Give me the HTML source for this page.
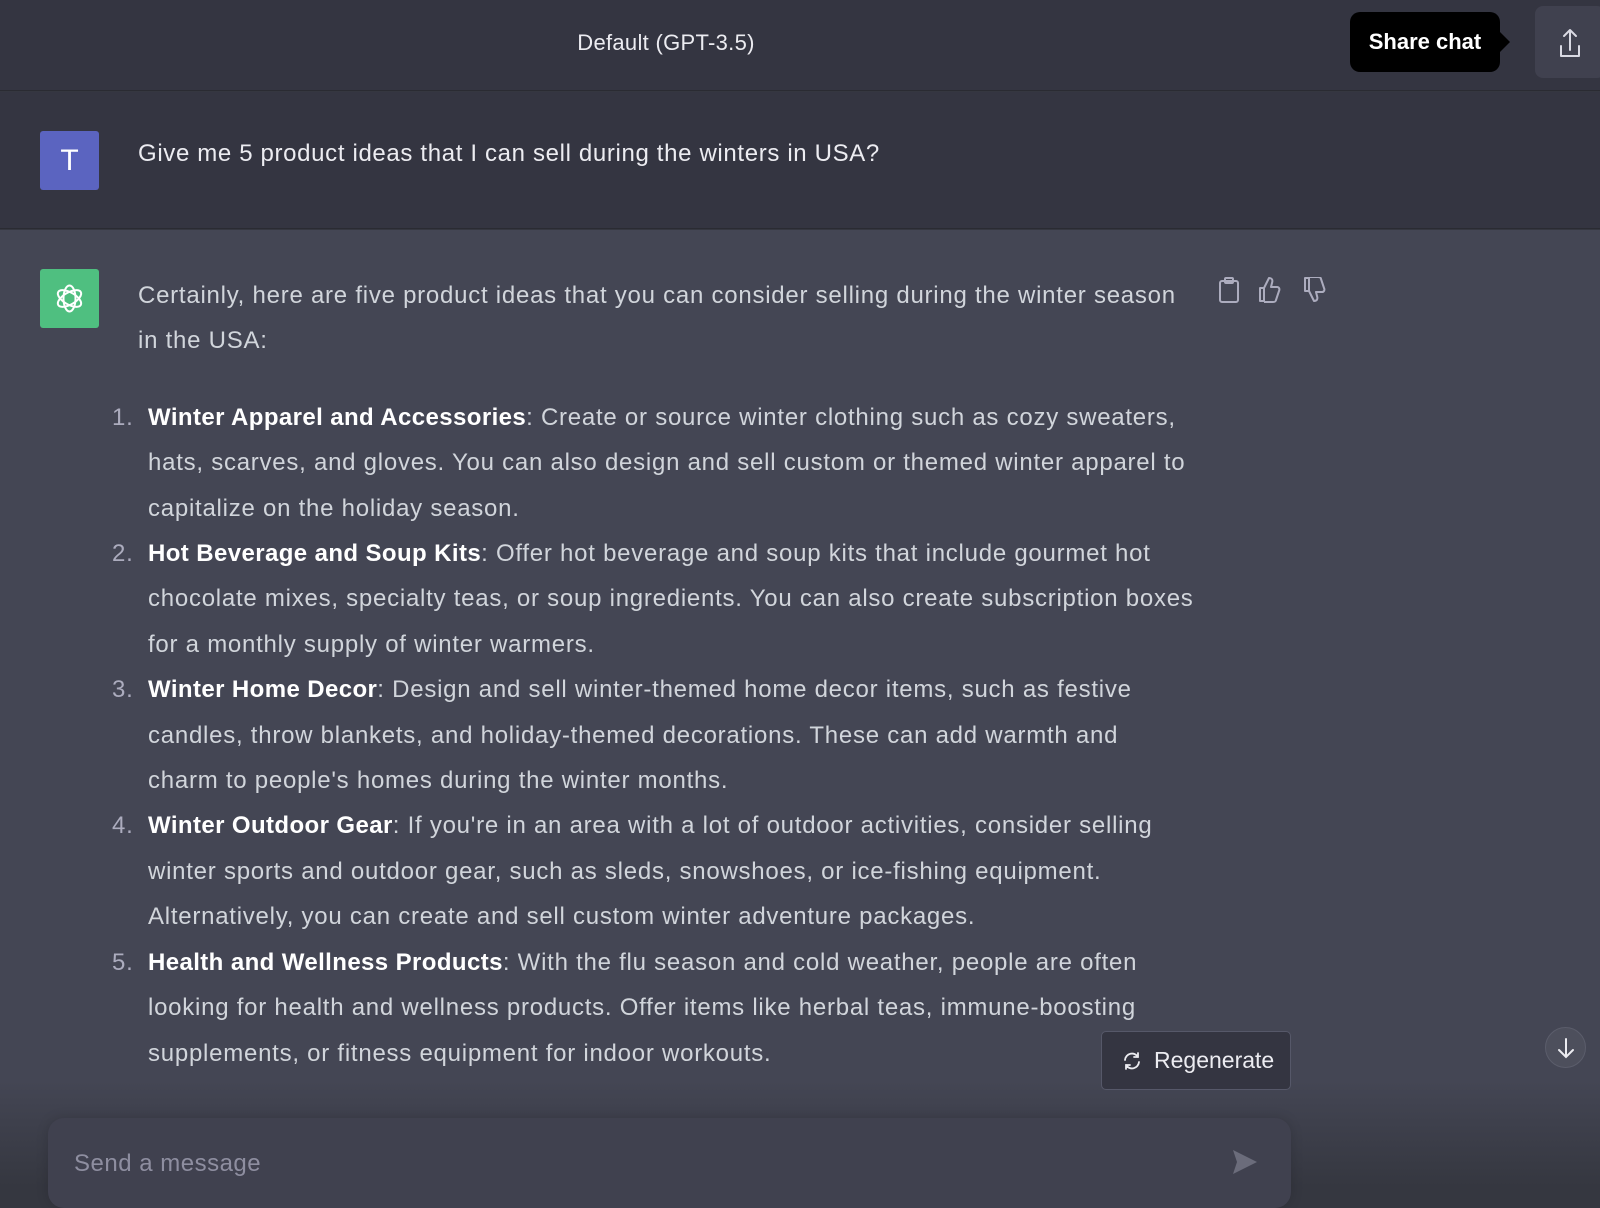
<!DOCTYPE html>
<html><head><meta charset="utf-8"><style>
*{margin:0;padding:0;box-sizing:border-box}
body{width:1600px;height:1187px;overflow:hidden;background:#353740;font-family:"Liberation Sans",sans-serif;position:relative}
.main{position:absolute;left:0;top:230px;width:1600px;height:860px;background:#444654}
.hdr{position:absolute;left:0;top:0;width:1600px;height:91px;background:#343541;border-bottom:1px solid #2a2b32}
.title{position:absolute;left:0;width:1332px;top:30px;text-align:center;color:#ececf1;font-size:22px;letter-spacing:0.3px}
.tip{position:absolute;left:1350px;top:12px;width:150px;height:60px;background:#000;border-radius:10px;color:#fff;font-weight:bold;font-size:22px;line-height:60px;text-align:center}
.tip:after{content:"";position:absolute;right:-10px;top:20px;border-left:10px solid #000;border-top:10px solid transparent;border-bottom:10px solid transparent}
.sbtn{position:absolute;left:1535px;top:6px;width:70px;height:72px;background:#40414f;border-radius:8px}
.user{position:absolute;left:0;top:92px;width:1600px;height:137px;background:#343541;border-bottom:1px solid #2a2b32}
.av{position:absolute;left:40px;width:59px;height:59px;border-radius:3px}
.utext{position:absolute;left:138px;top:138px;color:#ececf1;font-size:24px;line-height:32px;white-space:nowrap;letter-spacing:0.65px}
.ans{position:absolute;left:138px;top:273px;color:#d1d5db;font-size:24px;line-height:45.4px;white-space:nowrap;letter-spacing:0.75px}
.ans b{color:#fff;letter-spacing:0.4px}
.li{position:relative;padding-left:10px}
.num{position:absolute;left:-26px;color:#acacbe}
.bot{position:absolute;left:0;top:1080px;width:1600px;height:107px;background:linear-gradient(#444654,#353740)}
.regen{position:absolute;left:1101px;top:1031px;width:190px;height:59px;border:1px solid #565869;background:#343541;border-radius:5px;color:#ececf1;font-size:23px;line-height:57px;padding-left:52px}
.inp{position:absolute;left:48px;top:1118px;width:1243px;height:90px;background:#40414f;border-radius:16px;box-shadow:0 0 12px rgba(0,0,0,.15)}
.ph{position:absolute;left:26px;top:32px;color:#8e8ea0;font-size:24px;letter-spacing:0.5px}
.down{position:absolute;left:1545px;top:1027px;width:41px;height:41px;border-radius:50%;background:#4d4f5c;border:1px solid #5b5d6b}
</style></head><body>
<div class="main"></div>
<div class="hdr"><div class="title">Default (GPT-3.5)</div></div>
<div class="tip">Share chat</div>
<div class="sbtn"><svg width="70" height="72" viewBox="0 0 70 72" fill="none" stroke="#d9d9e3" stroke-width="2" stroke-linecap="round" stroke-linejoin="round"><path d="M26 40v10h18V40M35 24v20M29 30l6-6 6 6"/></svg></div>
<div class="user"></div>
<div class="av" style="top:131px;background:#5b64c0;color:#fff;font-size:30px;text-align:center;line-height:59px">T</div>
<div class="utext">Give me 5 product ideas that I can sell during the winters in USA?</div>
<div class="av" style="top:269px;background:#4fbf80"><svg width="59" height="59" viewBox="0 0 59 59" fill="none" stroke="#fff" stroke-width="2"><g transform="translate(29.5 29.5)"><ellipse rx="6" ry="13" transform="rotate(0)"/><ellipse rx="6" ry="13" transform="rotate(60)"/><ellipse rx="6" ry="13" transform="rotate(120)"/></g></svg></div>
<svg style="position:absolute;left:1218px;top:277px" width="120" height="26" fill="none" stroke="#acacbe" stroke-width="2" stroke-linejoin="round"><rect x="2" y="4" width="18" height="21" rx="2"/><rect x="7" y="1" width="8" height="5" rx="1"/><path d="M46 11v13h-4V11zM46 11l5-10c3 0 4 2 3 5l-1 4h6c2 0 3 2 2 4l-3 9c0 1-1 2-3 2H46"/><path d="M91 14V1h-4v13zM91 14l5 10c3 0 4-2 3-5l-1-4h6c2 0 3-2 2-4l-3-9c0-1-1-2-3-2H91"/></svg>
<div class="ans">
<div>Certainly, here are five product ideas that you can consider selling during the winter season</div>
<div>in the USA:</div>
<div style="height:31px"></div>
<div class="li"><span class="num">1.</span><b>Winter Apparel and Accessories</b>: Create or source winter clothing such as cozy sweaters,<br>hats, scarves, and gloves. You can also design and sell custom or themed winter apparel to<br>capitalize on the holiday season.</div>
<div class="li"><span class="num">2.</span><b>Hot Beverage and Soup Kits</b>: Offer hot beverage and soup kits that include gourmet hot<br>chocolate mixes, specialty teas, or soup ingredients. You can also create subscription boxes<br>for a monthly supply of winter warmers.</div>
<div class="li"><span class="num">3.</span><b>Winter Home Decor</b>: Design and sell winter-themed home decor items, such as festive<br>candles, throw blankets, and holiday-themed decorations. These can add warmth and<br>charm to people's homes during the winter months.</div>
<div class="li"><span class="num">4.</span><b>Winter Outdoor Gear</b>: If you're in an area with a lot of outdoor activities, consider selling<br>winter sports and outdoor gear, such as sleds, snowshoes, or ice-fishing equipment.<br>Alternatively, you can create and sell custom winter adventure packages.</div>
<div class="li"><span class="num">5.</span><b>Health and Wellness Products</b>: With the flu season and cold weather, people are often<br>looking for health and wellness products. Offer items like herbal teas, immune-boosting<br>supplements, or fitness equipment for indoor workouts.</div>
</div>
<div class="bot"></div>
<div class="regen"><svg style="position:absolute;left:20px;top:19px" width="20" height="20" fill="none" stroke="#ececf1" stroke-width="1.8" stroke-linecap="round"><path d="M3 9a7 7 0 0 1 13-3M17 11a7 7 0 0 1-13 3M16 2v4h-4M4 18v-4h4"/></svg>Regenerate</div>
<div class="down"><svg width="41" height="41" fill="none" stroke="#ececf1" stroke-width="2" stroke-linecap="round"><path d="M20 11v18M13 22l7 7 7-7"/></svg></div>
<div class="inp"><div class="ph">Send a message</div><svg style="position:absolute;left:1183px;top:30px" width="28" height="28"><path d="M2 2l24 12L2 26l4-12z" fill="#6b6c7b"/></svg></div>
</body></html>
